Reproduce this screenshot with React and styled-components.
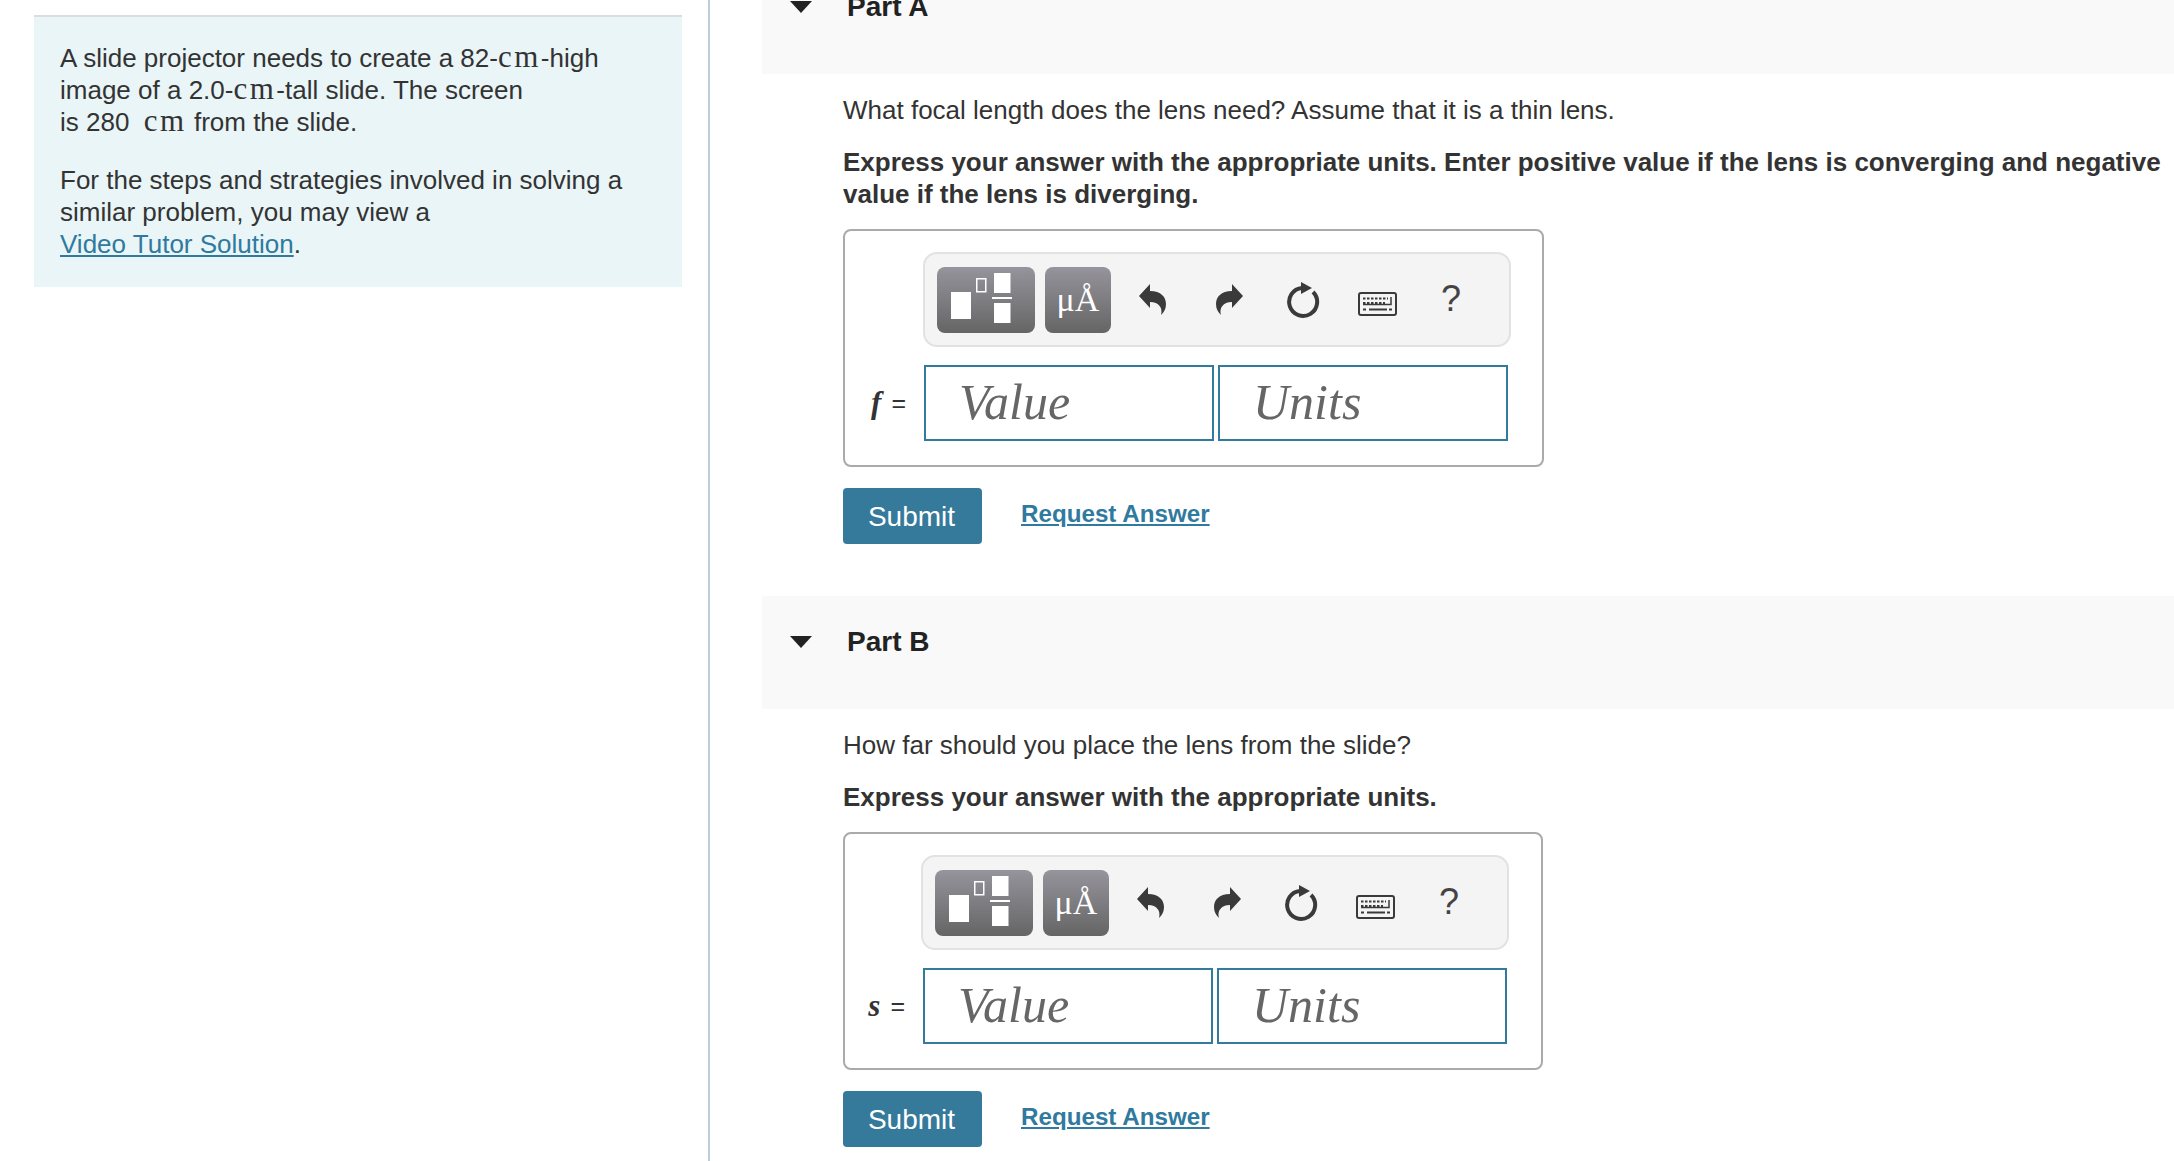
import React from 'react';
import styled, { createGlobalStyle } from 'styled-components';

const GlobalStyle = createGlobalStyle`
  html, body {
    margin: 0;
    padding: 0;
    background: #fff;
  }
  body {
    font-family: "Liberation Sans", Arial, sans-serif;
    font-size: 26px;
    line-height: 32px;
    color: #333;
  }
`;

const Page = styled.div`
  display: flex;
  height: 1161px;
  overflow: hidden;
`;

const Sidebar = styled.aside`
  flex: none;
  width: 648px;
  padding: 15px 26px 0 34px;
  border-right: 2px solid #bccddd;
`;

const InfoPanel = styled.div`
  background: #e9f5f7;
  border-top: 2px solid #dddddd;
  padding: 25px 26px 0 26px;
  height: 245px;
`;

const InfoText = styled.p`
  margin: 0 0 26px;
  &:last-child {
    margin-bottom: 0;
  }
`;

const Unit = styled.span`
  font-family: "Liberation Serif", serif;
  font-size: 31px;
  line-height: 0;
  letter-spacing: 2.5px;
`;

const TextLink = styled.a`
  color: #2f7a9e;
  text-decoration: underline;
`;

const Main = styled.main`
  flex: 1;
  min-width: 0;
  padding-left: 52px;
  margin-top: -39px;
`;

const PartHeader = styled.div`
  display: flex;
  align-items: flex-start;
  height: 113px;
  box-sizing: border-box;
  padding: 30px 0 0 28px;
  background: #f9f9f9;
`;

const Caret = styled.span`
  width: 0;
  height: 0;
  margin-top: 10px;
  border-left: 11px solid transparent;
  border-right: 11px solid transparent;
  border-top: 12px solid #222;
`;

const PartTitle = styled.h2`
  margin: 0 0 0 35px;
  font-size: 28px;
  line-height: 32px;
  font-weight: 700;
  color: #222;
`;

const PartBody = styled.div`
  padding: 20px 0 52px 81px;
`;

const Question = styled.p`
  margin: 0 0 20px;
`;

const Instruction = styled.p`
  margin: 0 0 19px;
  font-weight: 700;
`;

const AnswerBox = styled.div`
  width: ${(p) => p.$width}px;
  box-sizing: border-box;
  height: 238px;
  padding-top: 21px;
  border: 2px solid #aaaaaa;
  border-radius: 8px;
`;

const Toolbar = styled.div`
  display: flex;
  align-items: center;
  width: 588px;
  height: 95px;
  box-sizing: border-box;
  margin-left: ${(p) => p.$left}px;
  padding-left: 12px;
  background: #f4f4f4;
  border: 2px solid #e2e2e2;
  border-radius: 14px;
`;

const ToolButton = styled.button`
  display: flex;
  align-items: center;
  justify-content: center;
  flex: none;
  width: ${(p) => p.$width}px;
  height: 66px;
  margin-right: ${(p) => p.$gap}px;
  padding: 0;
  border: 0;
  border-radius: 8px;
  background: linear-gradient(#96949c, #656565);
  color: #fff;
  font-family: "Liberation Serif", serif;
  font-size: 34px;
  line-height: 66px;
`;

const IconSlot = styled.div`
  display: flex;
  align-items: center;
  justify-content: center;
  width: 75px;
  height: 40px;
  flex: none;
  padding-left: ${(p) => p.$nudgeX || 0}px;
  padding-top: ${(p) => p.$nudgeY || 0}px;
  padding-right: ${(p) => p.$nudgeLeft || 0}px;
  box-sizing: border-box;
`;

const HelpMark = styled.span`
  font-size: 36px;
  line-height: 40px;
  margin-bottom: 2px;
  color: #444;
`;

const InputRow = styled.div`
  display: flex;
  align-items: center;
  margin-top: 18px;
`;

const VarLabel = styled.label`
  display: flex;
  justify-content: flex-end;
  align-items: center;
  flex: none;
  gap: 10px;
  box-sizing: border-box;
  width: ${(p) => p.$width}px;
  padding-right: 18px;
  font-size: 25px;
  color: #333;
  i {
    font-family: "Liberation Serif", serif;
    font-size: 31px;
    font-weight: 700;
  }
`;

const FieldInput = styled.input`
  width: 290px;
  height: 76px;
  box-sizing: border-box;
  margin-right: 4px;
  padding: 0 0 2px 33px;
  border: 2px solid #337a9c;
  border-radius: 0;
  outline: none;
  background: #fff;
  font-family: "Liberation Serif", serif;
  font-style: italic;
  font-size: 50px;
  color: #666;
  &::placeholder {
    color: #666;
    opacity: 1;
  }
`;

const ActionRow = styled.div`
  display: flex;
  align-items: center;
  margin-top: 21px;
`;

const SubmitButton = styled.button`
  width: 139px;
  height: 56px;
  padding: 1px 2px 0 0;
  border: 0;
  border-radius: 4px;
  background: #35799b;
  color: #fff;
  font-family: "Liberation Sans", Arial, sans-serif;
  font-size: 28px;
`;

const RequestLink = styled.a`
  margin: -4px 0 0 39px;
  font-size: 24.2px;
  font-weight: 700;
  color: #2f7a9e;
  text-decoration: underline;
`;

const TemplateIcon = () => (
  <svg width="98" height="66" viewBox="0 0 98 66">
    <rect x="14" y="25" width="20" height="27" fill="#fff" />
    <rect x="39.75" y="11.75" width="9" height="13" fill="none" stroke="#fff" strokeWidth="1.5" />
    <rect x="57" y="6" width="16.5" height="20" fill="#fff" />
    <rect x="55" y="30" width="20" height="2" fill="#fff" />
    <rect x="57" y="36" width="16.5" height="20" fill="#fff" />
  </svg>
);

const ReplyIcon = ({ flip }) => (
  <svg width="27" height="31" viewBox="0 0 27 31" style={flip ? { transform: 'scaleX(-1)' } : undefined}>
    <path
      d="M0 12 L11 0 V7 C22 7 27 13 27 20 C27 25 25 28 22 31 C24 24 20 18 11 18 V24 Z"
      fill="#3a3a3a"
    />
  </svg>
);

const ResetIcon = () => (
  <svg width="36" height="38" viewBox="0 0 36 38">
    <path d="M17 7 A14 14 0 1 0 28 11" fill="none" stroke="#3a3a3a" strokeWidth="4" />
    <path d="M16 1 L27 7 L16 13 Z" fill="#3a3a3a" />
  </svg>
);

const KeyboardIcon = () => (
  <svg width="39" height="24" viewBox="0 0 39 24">
    <rect x="1" y="1" width="37" height="22" rx="2" fill="#f4f4f4" stroke="#3a3a3a" strokeWidth="2" />
    <path d="M5 6.5 H30" stroke="#3a3a3a" strokeWidth="2" strokeDasharray="2.5 1.5" />
    <path d="M5 11 H27" stroke="#3a3a3a" strokeWidth="2" strokeDasharray="2.5 1.5" />
    <path d="M33 5 V12.5 H5" fill="none" stroke="#3a3a3a" strokeWidth="1.5" />
    <path d="M5 17.5 H8 M11 17.5 H29 M31 17.5 H34" stroke="#3a3a3a" strokeWidth="2" />
  </svg>
);

const AnswerPart = ({ title, question, instruction, varName, boxWidth, toolbarLeft, labelWidth }) => (
  <section>
    <PartHeader>
      <Caret />
      <PartTitle>{title}</PartTitle>
    </PartHeader>
    <PartBody>
      <Question>{question}</Question>
      <Instruction>{instruction}</Instruction>
      <AnswerBox $width={boxWidth}>
        <Toolbar $left={toolbarLeft}>
          <ToolButton $width={98} $gap={10} aria-label="templates">
            <TemplateIcon />
          </ToolButton>
          <ToolButton $width={66} $gap={4} aria-label="units">μÅ</ToolButton>
          <IconSlot><ReplyIcon /></IconSlot>
          <IconSlot $nudgeX={4}><ReplyIcon flip /></IconSlot>
          <IconSlot><ResetIcon /></IconSlot>
          <IconSlot $nudgeY={8}><KeyboardIcon /></IconSlot>
          <IconSlot $nudgeLeft={3}><HelpMark>?</HelpMark></IconSlot>
        </Toolbar>
        <InputRow>
          <VarLabel $width={labelWidth}><i>{varName}</i> =</VarLabel>
          <FieldInput placeholder="Value" />
          <FieldInput placeholder="Units" />
        </InputRow>
      </AnswerBox>
      <ActionRow>
        <SubmitButton>Submit</SubmitButton>
        <RequestLink href="#">Request Answer</RequestLink>
      </ActionRow>
    </PartBody>
  </section>
);

export default function App() {
  return (
    <>
      <GlobalStyle />
      <Page>
        <Sidebar>
          <InfoPanel>
            <InfoText>
              A slide projector needs to create a 82-<Unit>cm</Unit>-high<br />
              image of a 2.0-<Unit>cm</Unit>-tall slide. The screen<br />
              is 280 &nbsp;<Unit>cm</Unit> from the slide.
            </InfoText>
            <InfoText>
              For the steps and strategies involved in solving a<br />
              similar problem, you may view a<br />
              <TextLink href="#">Video Tutor Solution</TextLink>.
            </InfoText>
          </InfoPanel>
        </Sidebar>
        <Main>
          <AnswerPart
            title="Part A"
            question="What focal length does the lens need? Assume that it is a thin lens."
            instruction="Express your answer with the appropriate units. Enter positive value if the lens is converging and negative value if the lens is diverging."
            varName="f"
            boxWidth={701}
            toolbarLeft={78}
            labelWidth={79}
          />
          <AnswerPart
            title="Part B"
            question="How far should you place the lens from the slide?"
            instruction="Express your answer with the appropriate units."
            varName="s"
            boxWidth={700}
            toolbarLeft={76}
            labelWidth={78}
          />
        </Main>
      </Page>
    </>
  );
}
